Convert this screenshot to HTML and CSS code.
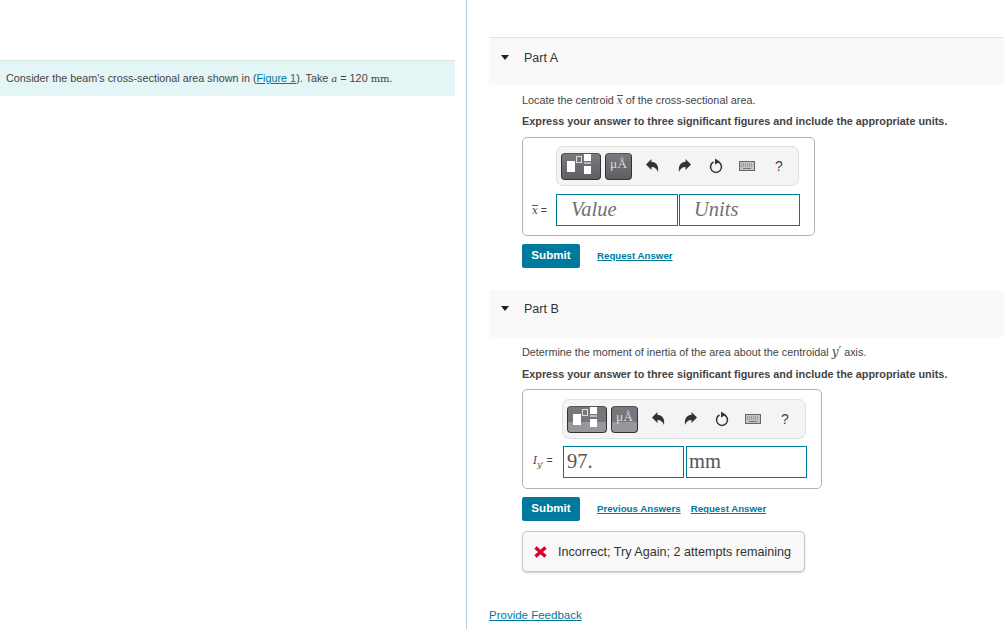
FILE: index.html
```html
<!DOCTYPE html>
<html lang="en">
<head>
<meta charset="utf-8">
<title>Beam cross-section</title>
<link rel="stylesheet" href="styles.css">
</head>
<body>
<div class="page">
  <aside class="left">
    <div class="intro">Consider the beam's cross-sectional area shown in (<a href="#">Figure 1</a>). Take <i class="m">a</i> = 120 <span class="m">mm</span>.</div>
  </aside>
  <main class="right">
    <section class="part">
      <header class="part-head first"><span class="caret"></span><span>Part A</span></header>
      <div class="part-body">
        <p class="q">Locate the centroid <i class="m bar">x</i> of the cross-sectional area.</p>
        <p class="q strong">Express your answer to three significant figures and include the appropriate units.</p>
        <div class="answer a1">
          <div class="toolbar">
            <span class="tool t1"><svg width="38" height="25" viewBox="0 0 38 25"><rect x="5" y="7" width="8" height="11" fill="#fff"/><rect x="14.500" y="2.500" width="5" height="6" fill="none" stroke="#ddd"/><rect x="22" y="0" width="7" height="7" fill="#fff"/><rect x="22" y="8.500" width="7" height="1" fill="#fff"/><rect x="22" y="12" width="7" height="8" fill="#fff"/></svg></span>
            <span class="tool t2">μÅ</span>
            <svg class="ic undo" width="13" height="14" viewBox="0 0 13 14"><path d="M0 5.500 5.500 0V3C9.500 3 13 5.500 12 13 11 10 9 8 5.500 8V11Z" fill="#333"/></svg>
            <svg class="ic redo" width="13" height="14" viewBox="0 0 13 14"><path d="M13 5.500 7.500 0V3C3.500 3 0 5.500 1 13 2 10 4 8 7.500 8V11Z" fill="#333"/></svg>
            <svg class="ic reset" width="14" height="16" viewBox="0 0 14 16"><path d="M4.500 4A5.500 5.500 0 1 0 9.500 4" fill="none" stroke="#333" stroke-width="1.500"/><path d="M6 .5 11 3.800 6 6.500Z" fill="#333"/></svg>
            <svg class="ic keys" width="16" height="10" viewBox="0 0 16 10"><rect x=".5" y=".5" width="15" height="9" fill="#c4c4c4" stroke="#666"/><path d="M2 3h12M2 5h12" stroke="#777" stroke-dasharray="1 1"/><path d="M4 7.500h8" stroke="#777"/></svg>
            <span class="help">?</span>
          </div>
          <div class="inputs">
            <span class="label"><i class="m bar">x</i> =</span>
            <span class="field ph">Value</span>
            <span class="field ph">Units</span>
          </div>
        </div>
        <div class="actions"><button class="submit">Submit</button><a href="#" class="act">Request Answer</a></div>
      </div>
    </section>
    <section class="part second">
      <header class="part-head"><span class="caret"></span><span>Part B</span></header>
      <div class="part-body">
        <p class="q">Determine the moment of inertia of the area about the centroidal <i class="m big">y</i><span class="m big">′</span> axis.</p>
        <p class="q strong">Express your answer to three significant figures and include the appropriate units.</p>
        <div class="answer a2">
          <div class="toolbar">
            <span class="tool t1 split"><svg width="38" height="25" viewBox="0 0 38 25"><rect x="5" y="7" width="8" height="11" fill="#fff"/><rect x="14.500" y="2.500" width="5" height="6" fill="none" stroke="#ddd"/><rect x="22" y="0" width="7" height="7" fill="#fff"/><rect x="22" y="8.500" width="7" height="1" fill="#fff"/><rect x="22" y="12" width="7" height="8" fill="#fff"/></svg></span>
            <span class="tool t2 split">μÅ</span>
            <svg class="ic undo" width="13" height="14" viewBox="0 0 13 14"><path d="M0 5.500 5.500 0V3C9.500 3 13 5.500 12 13 11 10 9 8 5.500 8V11Z" fill="#333"/></svg>
            <svg class="ic redo" width="13" height="14" viewBox="0 0 13 14"><path d="M13 5.500 7.500 0V3C3.500 3 0 5.500 1 13 2 10 4 8 7.500 8V11Z" fill="#333"/></svg>
            <svg class="ic reset" width="14" height="16" viewBox="0 0 14 16"><path d="M4.500 4A5.500 5.500 0 1 0 9.500 4" fill="none" stroke="#333" stroke-width="1.500"/><path d="M6 .5 11 3.800 6 6.500Z" fill="#333"/></svg>
            <svg class="ic keys" width="16" height="10" viewBox="0 0 16 10"><rect x=".5" y=".5" width="15" height="9" fill="#c4c4c4" stroke="#666"/><path d="M2 3h12M2 5h12" stroke="#777" stroke-dasharray="1 1"/><path d="M4 7.500h8" stroke="#777"/></svg>
            <span class="help">?</span>
          </div>
          <div class="inputs">
            <span class="label"><i class="m">I</i><sub class="m"><i>y</i>′</sub> =</span>
            <span class="field val">97.</span>
            <span class="field val">mm</span>
          </div>
        </div>
        <div class="actions"><button class="submit">Submit</button><a href="#" class="act">Previous Answers</a><a href="#" class="act tight">Request Answer</a></div>
        <div class="feedback"><svg width="13" height="12" viewBox="0 0 13 12"><path d="M1.500 1.500 11.500 10.500M11.500 1.500 1.500 10.500" stroke="#d9002f" stroke-width="3.400"/></svg><span>Incorrect; Try Again; 2 attempts remaining</span></div>
      </div>
    </section>
    <a href="#" class="provide">Provide Feedback</a>
  </main>
</div>
</body>
</html>
```
FILE: styles.css
```css
* { box-sizing: border-box; }
html, body { margin: 0; height: 100%; overflow: hidden; background: #fff; }
body { font-family: "Liberation Sans", Arial, sans-serif; color: #333; }
a { color: #007a9c; text-decoration: underline; }
.page { display: flex; height: 629px; }
.left { width: 467px; flex: none; padding: 60px 11px 0 0; border-right: 1px solid #b9cadb; }
.intro { height: 36px; background: #e4f5f5; border-top: 1px solid #dde3e3; padding-left: 6px; font-size: 10.800px; line-height: 34px; color: #444; white-space: nowrap; }
.m { font-family: "DejaVu Serif", "Liberation Serif", serif; }
.intro .m { font-size: 10px; }
.right { flex: 1; padding: 37px 0 0 22px; min-width: 0; }
.part-head { height: 48px; background: #f9f9f9; display: flex; align-items: center; padding: 0 0 8px 12px; gap: 15px; font-size: 12.500px; color: #333; }
.part-head.first { border-top: 1px solid #e2e2e2; }
.second { margin-top: 22px; }
.second .part-head { height: 47px; padding-bottom: 10px; }
.caret { width: 0; height: 0; border-left: 4.500px solid transparent; border-right: 4.500px solid transparent; border-top: 5px solid #222; }
.part-body { padding-left: 33px; }
.q { margin: 0; font-size: 10.800px; line-height: 14px; padding-top: 8px; color: #444; white-space: nowrap; }
.q .m { font-size: 10.500px; }
.q.strong { font-weight: bold; padding-top: 7px; color: #444; font-size: 10.850px; }
.second .q { padding-top: 8px; }
.second .q.strong { padding-top: 8px; }
.bar { display: inline-block; line-height: 9px; border-top: 1px solid #555; }
.q .big { font-size: 12px; }
.answer { border: 1px solid #b3b3b3; border-radius: 5px; margin-top: 9px; height: 99px; }
.a1 { width: 293px; padding: 8px 0 0 33px; }
.a2 { width: 300px; height: 100px; margin-top: 8px; padding: 9px 0 0 39px; }
.toolbar { width: 243px; height: 40px; background: #f4f4f4; border: 1px solid #e0e0e0; border-radius: 7px; display: flex; align-items: center; padding-left: 4px; }
.a2 .toolbar { width: 244px; }
.tool { height: 27px; border-radius: 4px; border: 1px solid #333; border-top-color: #555; background: linear-gradient(#7b7a7e, #5f5e62); display: flex; align-items: flex-start; justify-content: center; color: #ddd; flex: none; }
.split { background: linear-gradient(#77767a 0 60%, #98979b 60%); }
.t1 { width: 40px; }
.t2 { width: 27px; margin-left: 4px; font-family: "Liberation Serif", serif; font-size: 13.500px; line-height: 19px; }
.ic { flex: none; }
.undo { margin-left: 14px; }
.redo { margin-left: 19px; }
.reset { margin-left: 18px; }
.keys { margin-left: 16px; }
.help { margin-left: 20px; font-size: 14px; color: #444; }
.inputs { display: flex; align-items: center; margin-top: 8px; }
.a1 .inputs { margin-left: -24px; }
.a2 .inputs { margin-left: -29px; margin-top: 7px; }
.label { font-size: 10.500px; color: #444; width: 24px; flex: none; white-space: nowrap; }
.label .m { font-size: 10.500px; }
.a2 .label { width: 30px; }
.label sub.m { font-size: 8px; }
.field { height: 32px; width: 122px; border: 1px solid #007a9c; flex: none; font-family: "Liberation Serif", serif; font-size: 20.500px; line-height: 29px; color: #666; background: #fff; }
.field + .field { margin-left: 1px; width: 121px; }
.a2 .field { width: 121px; }
.a2 .field + .field { margin-left: 2px; }
.ph { font-style: italic; padding-left: 14px; color: #707070; }
.val { padding-left: 3px; color: #555; }
.val + .val { padding-left: 2px; }
.actions { display: flex; align-items: center; margin-top: 8px; height: 24px; }
.submit { width: 58px; height: 24px; border: 0; border-radius: 2px; background: #007a9c; color: #fff; font: bold 11.600px "Liberation Sans", sans-serif; padding: 0 0 4px; }
.act { margin-left: 17px; font-size: 9.700px; font-weight: bold; padding-bottom: 2px; }
.act.tight { margin-left: 10px; }
.feedback { width: 283px; height: 41px; margin-top: 10px; border: 1px solid #c8c8c8; border-radius: 5px; background: #f9f9f9; box-shadow: 0 1px 2px #ccc; display: flex; align-items: center; padding-left: 11px; gap: 11px; font-size: 12.600px; color: #333; white-space: nowrap; }
.provide { display: block; margin-top: 36px; font-size: 11.500px; line-height: 14px; }
```
